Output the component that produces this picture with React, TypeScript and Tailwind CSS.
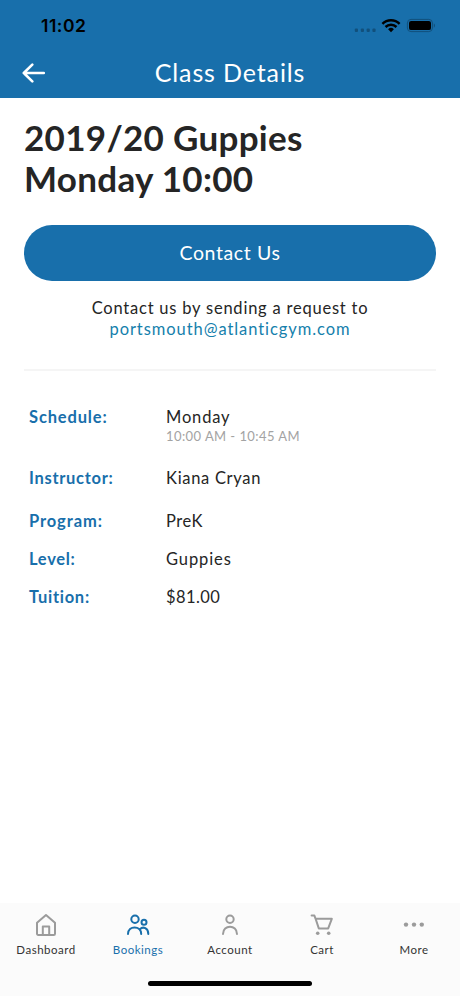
import type { ReactNode } from "react";

interface Detail {
  label: string;
  value: string;
  sub?: string;
  labelClass: string;
  valueClass: string;
  rowClass: string;
}

const DETAILS: Detail[] = [
  {
    label: "Schedule:",
    value: "Monday",
    sub: "10:00 AM - 10:45 AM",
    labelClass: "tracking-[0.85px]",
    valueClass: "tracking-[0.85px]",
    rowClass: "h-[61px]",
  },
  {
    label: "Instructor:",
    value: "Kiana Cryan",
    labelClass: "tracking-[0.7px]",
    valueClass: "tracking-[0.7px]",
    rowClass: "h-[43px]",
  },
  {
    label: "Program:",
    value: "PreK",
    labelClass: "tracking-[0.9px]",
    valueClass: "tracking-[0.5px]",
    rowClass: "h-[38px]",
  },
  {
    label: "Level:",
    value: "Guppies",
    labelClass: "tracking-[0.7px]",
    valueClass: "tracking-[0.9px]",
    rowClass: "h-[38px]",
  },
  {
    label: "Tuition:",
    value: "$81.00",
    labelClass: "tracking-[0.7px]",
    valueClass: "tracking-[0.4px]",
    rowClass: "h-[38px]",
  },
];

function StatusBar() {
  return (
    <div className="flex h-[51px] items-center justify-between pl-[41px] pr-[24px] text-black">
      <span className="font-['Inter',sans-serif] text-[17.5px] font-semibold leading-5 tracking-[0.5px]">
        11:02
      </span>
      <svg width="84" height="18" viewBox="0 0 84 18">
        <g fill="#11507c">
          <rect x="2.8" y="11.5" width="3.2" height="3.6" rx="1" />
          <rect x="8.8" y="11.5" width="3.2" height="3.6" rx="1" />
          <rect x="14.6" y="11.5" width="3.2" height="3.6" rx="1" />
          <rect x="20.4" y="11.5" width="3.2" height="3.6" rx="1" />
        </g>
        <g fill="none" stroke="#000" strokeWidth="2.5">
          <path d="M30.4 6.8a12.3 12.3 0 0 1 17.2 0" />
          <path d="M33.5 10a7.9 7.9 0 0 1 11 0" />
        </g>
        <path d="M39 15.2l-2.9-3a4.2 4.2 0 0 1 5.8 0z" />
        <rect
          x="55.4"
          y="2.4"
          width="25"
          height="12.2"
          rx="3.6"
          fill="none"
          stroke="#11507c"
          strokeWidth="1"
        />
        <rect x="57" y="3.9" width="22" height="9.2" rx="2.2" />
        <path d="M81.8 6.3c1.6.7 1.6 3.7 0 4.4z" fill="#11507c" />
      </svg>
    </div>
  );
}

function Header() {
  return (
    <header className="h-[98px] bg-[#186fab]">
      <StatusBar />
      <div className="grid h-[43px] grid-cols-[60px_1fr_60px] items-center">
        <button type="button" aria-label="Back" className="pl-[22px]">
          <svg
            width="24"
            height="22"
            viewBox="0 0 24 22"
            fill="none"
            stroke="#fff"
            strokeWidth="2.6"
            strokeLinecap="round"
            strokeLinejoin="round"
          >
            <path d="M10.3 2.6L1.8 11l8.5 8.4M1.8 11h20" />
          </svg>
        </button>
        <h1 className="pb-0.5 text-center text-[25px] leading-[30px] tracking-[0.87px] text-white">
          Class Details
        </h1>
      </div>
    </header>
  );
}

function DetailRow({ item }: { item: Detail }) {
  return (
    <div className={`flex ${item.rowClass}`}>
      <dt
        className={`w-[137px] text-[16.5px] font-bold leading-5 text-[#186fab] ${item.labelClass}`}
      >
        {item.label}
      </dt>
      <dd className="text-[#252525]">
        <p className={`text-[16.5px] leading-5 ${item.valueClass}`}>
          {item.value}
        </p>
        {item.sub && (
          <p className="text-[13px] leading-[18px] tracking-[0.43px] text-[#a3a3a3]">
            {item.sub}
          </p>
        )}
      </dd>
    </div>
  );
}

function Tab({
  label,
  active,
  children,
}: {
  label: string;
  active?: boolean;
  children: ReactNode;
}) {
  return (
    <button
      type="button"
      className={`flex flex-1 flex-col items-center pt-[9px] ${active ? "text-[#186fab]" : "text-[#9b9b9b]"}`}
    >
      <svg
        width="26"
        height="26"
        viewBox="0 0 26 26"
        fill="none"
        stroke="currentColor"
        strokeWidth="2"
        strokeLinecap="round"
        strokeLinejoin="round"
      >
        {children}
      </svg>
      <span
        className={`mt-[5px] text-[11.5px] leading-[14px] tracking-[0.5px] ${active ? "" : "text-[#333]"}`}
      >
        {label}
      </span>
    </button>
  );
}

function TabBar() {
  return (
    <nav className="h-[93px] bg-[#fbfbfb]">
      <div className="flex">
        <Tab label="Dashboard">
          <path d="M4 10.8L13 3l9 7.8v11a1.2 1.2 0 0 1-1.2 1.2H5.2A1.2 1.2 0 0 1 4 21.8z" />
          <path d="M9.8 23v-8.6h6.4V23" />
        </Tab>
        <Tab label="Bookings" active>
          <circle cx="10" cy="7.3" r="3.7" />
          <circle cx="19" cy="10.2" r="2.5" />
          <path d="M3 22c0-8.8 13.2-8.8 13.2 0" />
          <path d="M15 17.2c3-3.2 8.3-1.2 8.3 4.8" />
        </Tab>
        <Tab label="Account">
          <circle cx="13" cy="7.3" r="3.7" />
          <path d="M6 22c0-9.6 14-9.6 14 0" />
        </Tab>
        <Tab label="Cart">
          <path d="M2.6 3.6h2.8l1.2 3.2h16.2l-3.6 9.6H9.8L6.6 6.8" />
          <circle cx="8.7" cy="21.2" r="1.8" fill="currentColor" stroke="none" />
          <circle cx="19.7" cy="21.2" r="1.8" fill="currentColor" stroke="none" />
        </Tab>
        <Tab label="More">
          <g fill="currentColor" stroke="none">
            <circle cx="5" cy="12.6" r="2.2" />
            <circle cx="13" cy="12.6" r="2.2" />
            <circle cx="20.8" cy="12.6" r="2.2" />
          </g>
        </Tab>
      </div>
      <div className="mx-auto mt-[24px] h-[5px] w-[164px] rounded-full bg-black" />
    </nav>
  );
}

export default function App() {
  return (
    <div className="flex h-[996px] w-[460px] flex-col overflow-hidden bg-white font-['Lato',sans-serif]">
      <Header />
      <main className="flex-1 px-6 pt-[19px]">
        <h2 className="text-[35px] font-bold leading-[41px] text-[#252525]">
          <span className="block tracking-[0.3px]">2019/20 Guppies</span>
          <span className="block tracking-[0.3px]">Monday 10:00</span>
        </h2>
        <button
          type="button"
          className="mt-[25.5px] block h-14 w-full rounded-full bg-[#186fab] text-[19.5px] tracking-[0.6px] text-white"
        >
          Contact Us
        </button>
        <div className="mt-[17px] text-center text-[16.5px] leading-[21px]">
          <p className="tracking-[0.78px] text-[#252525]">
            Contact us by sending a request to
          </p>
          <p className="tracking-[0.93px] text-[#1580ac]">
            portsmouth@atlanticgym.com
          </p>
        </div>
        <hr className="mt-[29.5px] border-t-2 border-[#f5f5f5]" />
        <dl className="pl-[5px] pt-[36px]">
          {DETAILS.map((item) => (
            <DetailRow key={item.label} item={item} />
          ))}
        </dl>
      </main>
      <TabBar />
    </div>
  );
}
